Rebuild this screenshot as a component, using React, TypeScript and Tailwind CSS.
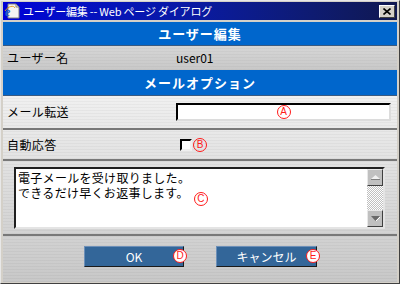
const jp = 'font-["MS_PGothic","Noto_Sans_CJK_JP",sans-serif]';

const metal =
  "bg-[image:repeating-linear-gradient(0deg,rgba(0,0,0,0.035)_0px,rgba(0,0,0,0.035)_1px,transparent_1px,transparent_3px),linear-gradient(#f0f0f0,#c8c8c8)]";

function Mark({ letter, fill = false }: { letter: string; fill?: boolean }) {
  return (
    <span
      className={`inline-flex items-center justify-center w-[14px] h-[14px] rounded-full border-[1.5px] border-[#ff1a1a] text-[#ff1a1a] text-[10px] leading-none font-["Liberation_Sans",sans-serif] ${
        fill ? "bg-white" : ""
      }`}
    >
      {letter}
    </span>
  );
}

function IeIcon() {
  return (
    <svg width="16" height="16" viewBox="0 0 16 16">
      <path d="M4 1h8l3 3v11H4z" fill="#f4f4f4" stroke="#808080" />
      <path d="M12 1v3h3" fill="none" stroke="#808080" />
      <text
        x="1"
        y="13"
        fontSize="12"
        fontWeight="bold"
        fill="#1c5fd0"
        fontFamily="Liberation Serif, serif"
        fontStyle="italic"
      >
        e
      </text>
      <path d="M1 8c3-5 9-6 10-3" fill="none" stroke="#e0a020" strokeWidth="1" />
    </svg>
  );
}

function Header({ title, h }: { title: string; h: string }) {
  return (
    <div className={`${h} bg-[#0066cc] border-b border-[#3a5a80] flex items-center justify-center text-white text-[13px] font-bold tracking-[1px]`}>
      {title}
    </div>
  );
}

export default function App() {
  return (
    <div className={`w-[400px] h-[284px] bg-[#d4d0c8] border border-t-[#e8e8e8] border-l-[#e8e8e8] border-r-[#404040] border-b-[#404040] pt-[1px] px-[2px] ${jp}`}>
      {/* title bar */}
      <div className="h-[18px] flex items-center bg-gradient-to-r from-[#0000d8] via-[#0a1aa0] to-[#101850] pl-[1px] pr-[2px]">
        <IeIcon />
        <span className="ml-[3px] text-white text-[11px] leading-none tracking-[-0.2px]">
          ユーザー編集 -- Web ページ ダイアログ
        </span>
        <button className="ml-auto w-[16px] h-[13px] bg-[#d4d0c8] border border-t-white border-l-white border-r-[#404040] border-b-[#404040] flex items-center justify-center">
          <svg width="8" height="7" viewBox="0 0 8 7">
            <path d="M0.5 0.5l7 6M7.5 0.5l-7 6" stroke="#000" strokeWidth="1.6" />
          </svg>
        </button>
      </div>

      <div className="mt-[2px] h-[260px] flex flex-col bg-[#d0d0d0]">
        <Header title="ユーザー編集" h="h-[24px]" />
        <div className="h-[24px] flex items-center bg-[image:repeating-linear-gradient(0deg,rgba(0,0,0,0.03)_0px,rgba(0,0,0,0.03)_1px,transparent_1px,transparent_3px),linear-gradient(#d6d6d6,#c8c8c8)] text-[12px] text-black">
          <span className="w-[173px] pl-[4px] tracking-[0.4px]">ユーザー名</span>
          <span>user01</span>
        </div>
        <Header title="メールオプション" h="h-[26px]" />

        <div className={`flex-1 flex flex-col ${metal}`}>
          <div className="h-[34px] flex items-center border-b-2 border-[#787878] text-[12px]">
            <span className="w-[173px] pl-[4px] tracking-[0.4px]">メール転送</span>
            <div className="w-[215px] h-[18px] bg-white border-2 border-t-[#000] border-l-[#000] border-r-[#dcdcdc] border-b-[#dcdcdc] flex items-center justify-center">
              <Mark letter="A" />
            </div>
          </div>

          <div className="h-[31px] flex items-center border-b-2 border-[#787878] text-[12px]">
            <span className="w-[177px] pl-[4px] tracking-[0.4px]">自動応答</span>
            <span className="w-[12px] h-[12px] bg-white border-2 border-t-[#000] border-l-[#000] border-r-[#f0f0f0] border-b-[#f0f0f0]" />
            <span className="ml-[1px] flex">
              <Mark letter="B" />
            </span>
          </div>

          <div className="h-[75px] pt-[6px] pl-[11px] pr-[12px] border-b-2 border-[#787878]">
            <div className="h-[62px] flex bg-white border-2 border-t-[#202020] border-l-[#202020] border-r-[#e4e4e4] border-b-[#e4e4e4]">
              <div className="relative flex-1 pl-[2px] pt-[1px] text-[12px] leading-[15px] tracking-[0.3px]">
                <div>電子メールを受け取りました。</div>
                <div>できるだけ早くお返事します。</div>
                <span className="absolute left-[178px] top-[23px] flex">
                  <Mark letter="C" />
                </span>
              </div>
              <div className="w-[16px] flex flex-col bg-[image:repeating-conic-gradient(#c0c0c0_0_25%,#ffffff_0_50%)] bg-[length:2px_2px]">
                <div className="h-[17px] bg-[#c0c0c0] border border-t-[#e8e8e8] border-l-[#e8e8e8] border-r-[#404040] border-b-[#404040] flex items-center justify-center">
                  <svg width="9" height="5" viewBox="0 0 9 5">
                    <path d="M4.5 0L9 4H0z" fill="#f0f0f0" />
                    <path d="M0 4.5h9" stroke="#808080" />
                  </svg>
                </div>
                <div className="flex-1" />
                <div className="h-[17px] bg-[#c0c0c0] border border-t-[#e8e8e8] border-l-[#e8e8e8] border-r-[#404040] border-b-[#404040] flex items-center justify-center">
                  <svg width="9" height="5" viewBox="0 0 9 5">
                    <path d="M0 0h9L4.5 5z" fill="#6a6a6a" />
                    <path d="M5 5l4-4" stroke="#ffffff" />
                  </svg>
                </div>
              </div>
            </div>
          </div>

          <div className="flex-1 flex pt-[10px] pl-[81px] gap-[32px] text-[12px]">
            <div className="relative w-[100px] h-[21px] bg-[#336699] border border-t-[#6c8fb8] border-l-[#6c8fb8] border-r-[#1a1a1a] border-b-[#1a1a1a] flex items-center justify-center text-white">
              OK
              <span className="absolute right-[-4px] top-[2px] flex">
                <Mark letter="D" fill />
              </span>
            </div>
            <div className="relative w-[101px] h-[21px] bg-[#336699] border border-t-[#6c8fb8] border-l-[#6c8fb8] border-r-[#1a1a1a] border-b-[#1a1a1a] flex items-center justify-center text-white">
              キャンセル
              <span className="absolute right-[-4px] top-[2px] flex">
                <Mark letter="E" fill />
              </span>
            </div>
          </div>
        </div>
      </div>
    </div>
  );
}
